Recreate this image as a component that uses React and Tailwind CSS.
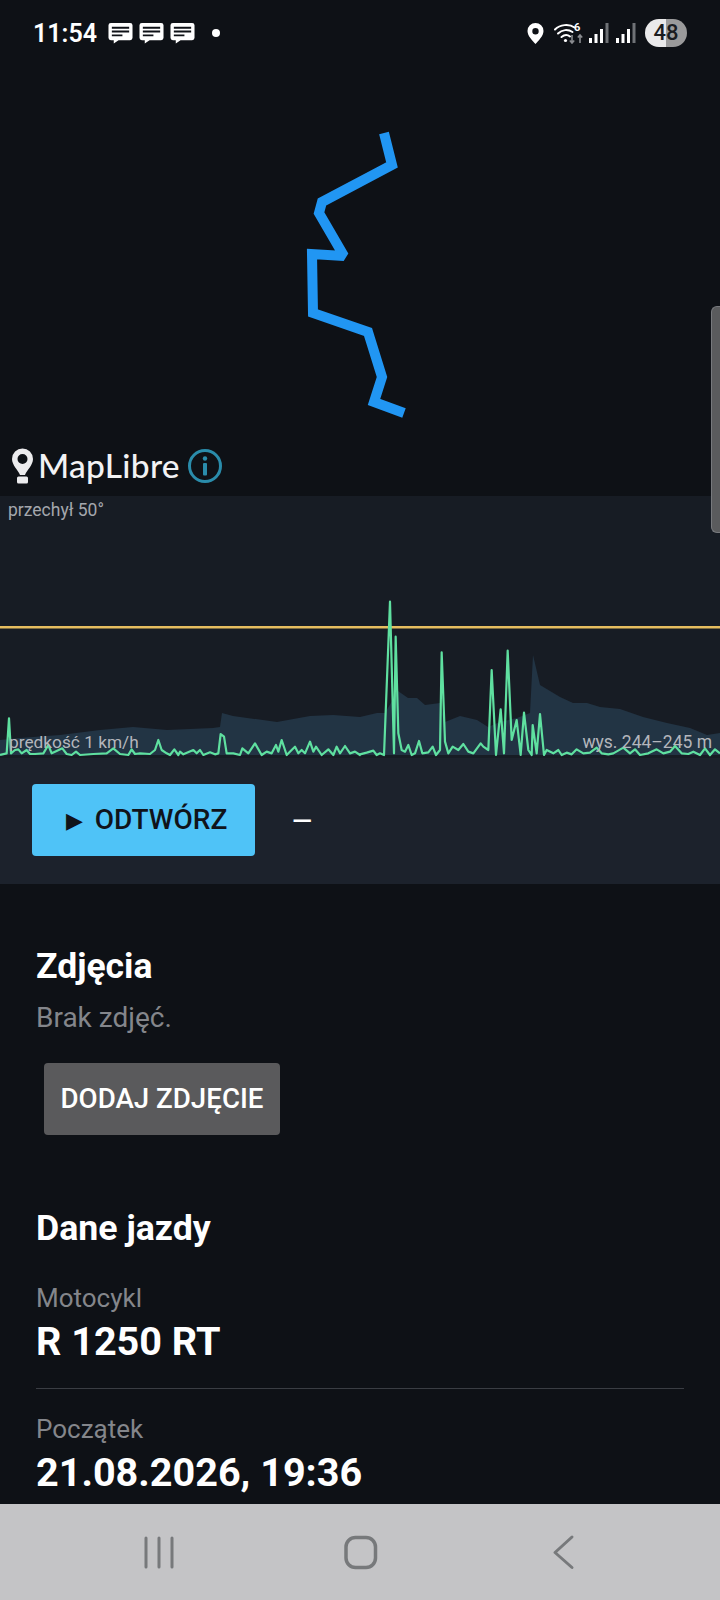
const toPts = (arr, fn) => arr.map(([x, y]) => fn(x, y).join(",")).join(" ");

const ELEV = [[0,740],[20,738],[60,735],[100,730],[133,727],[167,730],[213,728],[220,727],[222,713],[233,716],[277,722],[310,716],[333,715],[360,717],[377,713],[385,713],[398,691],[408,698],[417,698],[425,705],[440,703],[445,722],[460,716],[477,720],[488,727],[500,722],[517,718],[530,713],[533,655],[540,685],[560,697],[573,703],[587,703],[600,707],[620,709],[643,717],[667,723],[690,728],[707,735],[720,733],[720,755],[0,755]];

const S1 = [[0,495],[20,490],[27,385],[33,490],[45,480],[55,478],[65,490],[80,480],[90,492],[105,492],[130,490],[145,465],[155,490],[165,485],[187,475],[200,492],[215,495],[228,485],[240,495],[280,492],[320,490],[340,475],[360,492],[385,495],[395,478],[405,492],[420,490],[450,492],[465,480],[475,450],[485,480],[500,490],[510,495],[523,478],[535,495],[540,485],[550,493],[580,480],[590,490],[600,480],[610,495],[630,487],[645,493],[655,490],[662,432],[672,440],[680,490],[700,490],[720,495],[727,475],[745,490],[765,460],[785,495],[800,485],[815,490],[828,465],[835,485],[845,450],[860,495],[875,480],[885,470],[895,490],[905,480],[915,490],[930,455],[940,485],[948,470],[965,495],[985,478],[1000,495],[1010,470],[1020,490],[1035,468],[1050,490],[1065,485],[1080,495]];

const S2 = [[0,493],[20,488],[40,482],[50,495],[60,490],[72,495],[90,35],[102,490],[107,140],[115,430],[125,480],[135,485],[145,465],[155,495],[165,490],[177,453],[187,490],[205,487],[218,470],[228,495],[240,480],[245,187],[255,455],[265,490],[278,470],[295,480],[310,462],[325,485],[340,490],[362,460],[370,470],[385,480],[395,240],[408,495],[422,358],[432,490],[443,182],[455,450],[470,390],[482,495],[492,368],[505,480],[515,495],[518,405],[530,490],[540,372],[552,495],[560,480],[580,490],[595,480],[605,495],[620,488],[635,493],[650,478],[670,490],[690,488],[710,473],[725,490],[745,493],[760,490],[790,473],[810,490],[825,478],[840,495],[865,490],[890,478],[910,490],[930,485],[945,468],[965,490],[985,492],[1000,485],[1020,495],[1035,475],[1050,495],[1065,478],[1080,490]];

const speed =
  toPts(S1, (x, y) => [x / 3, y / 3 + 94]) + " " + toPts(S2, (x, y) => [360 + x / 3, y / 3 + 94]);
const elev = toPts(ELEV, (x, y) => [x, y - 496]);

function Msg() {
  return (
    <svg width="25" height="22" viewBox="0 0 26 22">
      <path fill="#fff" fillRule="evenodd" d="M3 0.5h20a2.5 2.5 0 0 1 2.5 2.5v13a2.5 2.5 0 0 1-2.5 2.5H11l-5 3.5v-3.5H3A2.5 2.5 0 0 1 .5 16V3A2.5 2.5 0 0 1 3 .5zM4 4.500v2h18v-2zM4 8.500v2h18v-2zM4 12.500v2h11v-2z" />
    </svg>
  );
}

function Signal() {
  return (
    <svg width="20" height="21" viewBox="0 0 20 21">
      <rect x="0" y="15" width="3" height="5" fill="#fff" />
      <rect x="5.500" y="11" width="3" height="9" fill="#fff" />
      <rect x="11" y="6" width="3" height="14" fill="#fff" />
      <rect x="16.500" y="0" width="3" height="20" fill="#6f7276" />
    </svg>
  );
}

function StatusBar() {
  return (
    <div className="flex h-[66px] items-center justify-between pl-[33px] pr-[33px]">
      <div className="flex items-center">
        <span className="text-[25px] font-semibold leading-none text-white">11:54</span>
        <div className="ml-[11px] flex items-center gap-[6px]">
          <Msg />
          <Msg />
          <Msg />
        </div>
        <span className="ml-[17px] h-[8px] w-[8px] rounded-full bg-white" />
      </div>
      <div className="flex items-center">
        <svg className="ml-[2px]" width="17" height="21" viewBox="0 0 17 21">
          <path fill="#fff" fillRule="evenodd" d="M8.500 0A8 8 0 0 0 .5 8c0 5 5 9.500 8 13 3-3.500 8-8 8-13a8 8 0 0 0-8-8zm0 5a3.200 3.200 0 1 1 0 6.400 3.200 3.200 0 0 1 0-6.400z" />
        </svg>
        <svg className="ml-[10px]" width="30" height="22" viewBox="0 0 30 22">
          <g fill="none" stroke="#fff" strokeWidth="2" strokeLinecap="round">
            <path d="M1 7.500C6 2.500 15 1.500 20.500 5.500" />
            <path d="M4 11.500C8 7.500 14 7 18.500 10" />
            <path d="M7.500 15c3-2.500 6-2.500 8.500-.5" />
          </g>
          <circle cx="11.500" cy="18.500" r="1.600" fill="#fff" />
          <text x="20" y="9" fill="#fff" fontSize="11" fontWeight="700" fontFamily="Roboto, sans-serif">6</text>
          <path d="M18 13v8m-2.200-2.500L18 21l2.200-2.500M26 21v-8m-2.200 2.500L26 13l2.200 2.500" fill="none" stroke="#8a8c90" strokeWidth="1.600" />
        </svg>
        <div className="ml-[5px] flex items-center gap-[7px]">
          <Signal />
          <Signal />
        </div>
        <div className="relative ml-[9px] flex h-[28px] w-[42px] items-center justify-center overflow-hidden rounded-full bg-[linear-gradient(90deg,#e9e9ea_50%,#9a9a9b_50%)]">
          <span className="text-[22px] font-medium leading-none text-[#1a1c20]">48</span>
        </div>
      </div>
    </div>
  );
}

function MapArea() {
  return (
    <div className="relative z-10 h-[430px]">
      <svg className="block" width="720" height="430" viewBox="0 66 720 430">
        <polyline
          points="384,133 392,165 322,202 319,213 344,256 312,254 313,313 368,332 382,377 374,402 404,413"
          fill="none"
          stroke="#2196f3"
          strokeWidth="10"
          strokeLinejoin="miter"
          strokeMiterlimit="1.900"
        />
      </svg>
      <div className="absolute bottom-[12px] left-[11px] flex items-center">
        <svg width="23" height="36" viewBox="0 0 23 36">
          <path fill="#ececee" fillRule="evenodd" d="M11.500 .5a10.500 10.500 0 0 0-10.500 10.500c0 6 6 11 8 16h5c2-5 8-10 8-16a10.500 10.500 0 0 0-10.500-10.500zm0 5.500a5 5 0 1 1 0 10 5 5 0 0 1 0-10z" />
          <rect x="6" y="28.500" width="11" height="7" rx="1.500" fill="#ececee" />
        </svg>
        <span className="ml-[4px] font-[Lato,sans-serif] text-[33.5px] font-medium leading-none tracking-[0.3px] text-[#f2f2f4]">MapLibre</span>
        <svg className="ml-[7px]" width="36" height="36" viewBox="0 0 36 36">
          <circle cx="18" cy="18" r="15.500" fill="none" stroke="#2a8cab" strokeWidth="3" />
          <circle cx="18" cy="10.500" r="2.200" fill="#2a8cab" />
          <rect x="16" y="15" width="4" height="12.500" rx="1" fill="#2a8cab" />
        </svg>
      </div>
      <div className="absolute right-0 top-[240px] h-[227px] w-[9px] rounded-l-[6px] border border-r-0 border-[#77797d] bg-[#5a5b5d]" />
    </div>
  );
}

function Chart() {
  return (
    <div className="relative h-[262px] bg-[#171c24]">
      <svg className="block" width="720" height="262" viewBox="0 0 720 262">
        <polygon points={elev} fill="#223444" />
        <rect x="0" y="130" width="720" height="2.500" fill="#e6bd5f" />
        <polyline points={speed} fill="none" stroke="#5fe0a0" strokeWidth="2.200" strokeLinejoin="round" />
      </svg>
      <span className="absolute left-[8px] top-[4px] text-[17.5px] leading-[20px] text-[#a4a7ad]">przechył 50°</span>
      <span className="absolute left-[9px] top-[236px] text-[17.3px] leading-[20px] text-[#b4b6bc]">prędkość 1 km/h</span>
      <span className="absolute right-[8px] top-[236px] text-[17.5px] leading-[20px] text-[#b4b6bc]">wys. 244–245 m</span>
    </div>
  );
}

function Controls() {
  return (
    <div className="flex h-[126px] items-start bg-[#1c222c] pl-[32px] pt-[26px]">
      <button className="flex h-[72px] w-[223px] items-center justify-center rounded-[4px] bg-[#4fc3f7] pl-[6px] text-[28px] font-medium text-[#10131a]">
        <span className="mr-[12px] text-[22px]">▶</span>ODTWÓRZ
      </button>
      <span className="ml-[37px] mt-[19px] text-[26px] font-medium leading-[36px] text-white">—</span>
    </div>
  );
}

function Field({ label, value, border }) {
  return (
    <div className={border ? "h-[106px] border-b border-[#3a3d43]" : "h-[106px]"}>
      <div className="text-[26px] leading-[30px] text-[#84868b]">{label}</div>
      <div className="text-[39.6px] font-bold leading-[58px] text-white">{value}</div>
    </div>
  );
}

function Details() {
  return (
    <div className="flex-1 overflow-hidden px-[36px] pt-[61px]">
      <h2 className="text-[35.5px] font-bold leading-[42px] text-white">Zdjęcia</h2>
      <p className="mt-[13px] text-[28px] leading-[36px] text-[#84868b]">Brak zdjęć.</p>
      <button className="ml-[8px] mt-[27px] flex h-[72px] w-[236px] items-center justify-center rounded-[4px] bg-[#5a5a5c] text-[27.7px] font-medium text-white">
        DODAJ ZDJĘCIE
      </button>
      <h2 className="mt-[72px] text-[35.7px] font-bold leading-[42px] text-white">Dane jazdy</h2>
      <div className="mt-[34px]">
        <Field label="Motocykl" value="R 1250 RT" border />
        <div className="mt-[25px]">
          <Field label="Początek" value="21.08.2026, 19:36" />
        </div>
      </div>
    </div>
  );
}

function NavBar() {
  return (
    <div className="h-[96px] bg-[#c4c4c6]">
      <svg className="block" width="720" height="96" viewBox="0 1504 720 96">
        <g fill="none" stroke="#77797b" strokeWidth="3" strokeLinecap="round">
          <path d="M146 1538v29M159 1538v29M172 1538v29" />
          <rect x="346" y="1537.500" width="29.500" height="30" rx="9.500" strokeWidth="3.500" />
          <path d="M572 1537l-17 15.500 17 15" strokeLinejoin="round" />
        </g>
      </svg>
    </div>
  );
}

export default function App() {
  return (
    <div className="flex h-[1600px] w-[720px] flex-col overflow-hidden bg-[#0e1116] font-[Roboto,sans-serif]">
      <StatusBar />
      <MapArea />
      <Chart />
      <Controls />
      <Details />
      <NavBar />
    </div>
  );
}
